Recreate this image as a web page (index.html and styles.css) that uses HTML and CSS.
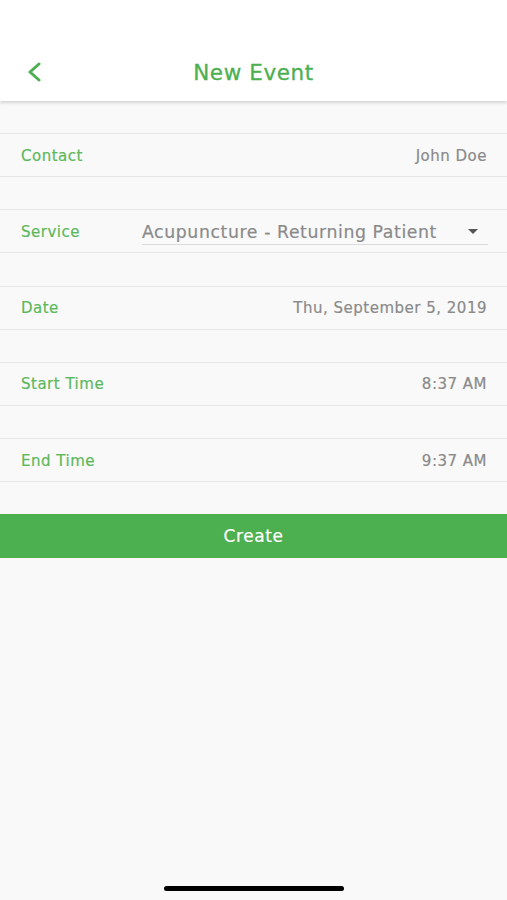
FILE: index.html
```html
<!DOCTYPE html>
<html lang="en">
<head>
  <meta charset="UTF-8">
  <title>New Event</title>
  <link rel="stylesheet" href="styles.css">
</head>
<body>
  <header class="topbar">
    <button class="back" aria-label="Back">
      <svg width="16" height="20" viewBox="0 0 16 20">
        <path d="M13 2 L4 10 L13 18" fill="none" stroke="#4caf50" stroke-width="3" stroke-linecap="round" stroke-linejoin="round"/>
      </svg>
    </button>
    <h1>New Event</h1>
  </header>

  <main class="form">
    <div class="row">
      <span class="label">Contact</span>
      <span class="value">John Doe</span>
    </div>
    <div class="row">
      <span class="label">Service</span>
      <div class="select">
        <span>Acupuncture - Returning Patient</span>
        <span class="caret"></span>
      </div>
    </div>
    <div class="row">
      <span class="label">Date</span>
      <span class="value">Thu, September 5, 2019</span>
    </div>
    <div class="row">
      <span class="label">Start Time</span>
      <span class="value">8:37 AM</span>
    </div>
    <div class="row">
      <span class="label">End Time</span>
      <span class="value">9:37 AM</span>
    </div>
    <button class="create">Create</button>
  </main>

  <div class="home-bar"></div>
</body>
</html>
```

FILE: styles.css
```css
body {
  font-family: "DejaVu Sans", sans-serif;
  margin: 0;
  height: 900px;
  background-color: #f9f9f9;
  display: flex;
  flex-direction: column;
  overflow: hidden;
}
.topbar {
  height: 101px;
  background: #fff;
  box-shadow: 0 2px 3px rgba(0,0,0,0.15);
  display: flex;
  align-items: flex-end;
  justify-content: center;
  position: relative;
  padding-bottom: 16px;
  box-sizing: border-box;
}
.topbar h1 {
  margin: 0;
  font-size: 21.5px;
  font-weight: normal;
  color: #4caf50;
  letter-spacing: 0.6px;
  -webkit-text-stroke: 0.3px #4caf50;
}
.back {
  position: absolute;
  left: 26px;
  bottom: 19px;
  border: 0;
  background: none;
  padding: 0;
  line-height: 0;
}
.form {
  display: flex;
  flex-direction: column;
  gap: 32.25px;
  padding-top: 32px;
  flex: 1;
}
.row {
  height: 44px;
  box-sizing: border-box;
  border-top: 1px solid #e6e6e6;
  border-bottom: 1px solid #e6e6e6;
  display: flex;
  align-items: center;
  justify-content: space-between;
  padding: 1px 20px 0 21px;
  font-size: 15px;
  letter-spacing: 0.5px;
}
.label {
  color: #5cb85c;
  -webkit-text-stroke: 0.2px #5cb85c;
}
.value {
  color: #8a8a8a;
  -webkit-text-stroke: 0.2px #8a8a8a;
}
.select {
  width: 346px;
  height: 25px;
  box-sizing: border-box;
  border-bottom: 1px solid #dcdcdc;
  display: flex;
  align-items: center;
  justify-content: space-between;
  color: #8a8a8a;
  font-size: 17.3px;
  letter-spacing: 0.6px;
  -webkit-text-stroke: 0.2px #8a8a8a;
  margin-top: 1px;
  margin-right: -1px;
}
.caret {
  width: 0;
  height: 0;
  border-left: 5px solid transparent;
  border-right: 5px solid transparent;
  border-top: 5px solid #555;
  margin-right: 10px;
}
.create {
  height: 44px;
  border: 0;
  background: #4caf50;
  color: #fff;
  font-family: "DejaVu Sans", sans-serif;
  font-size: 17px;
  letter-spacing: 0.6px;
  -webkit-text-stroke: 0.2px #fff;
  padding: 0;
}
.home-bar {
  width: 180px;
  height: 5px;
  border-radius: 3px;
  background: #000;
  margin: 0 auto 9px;
}
```
